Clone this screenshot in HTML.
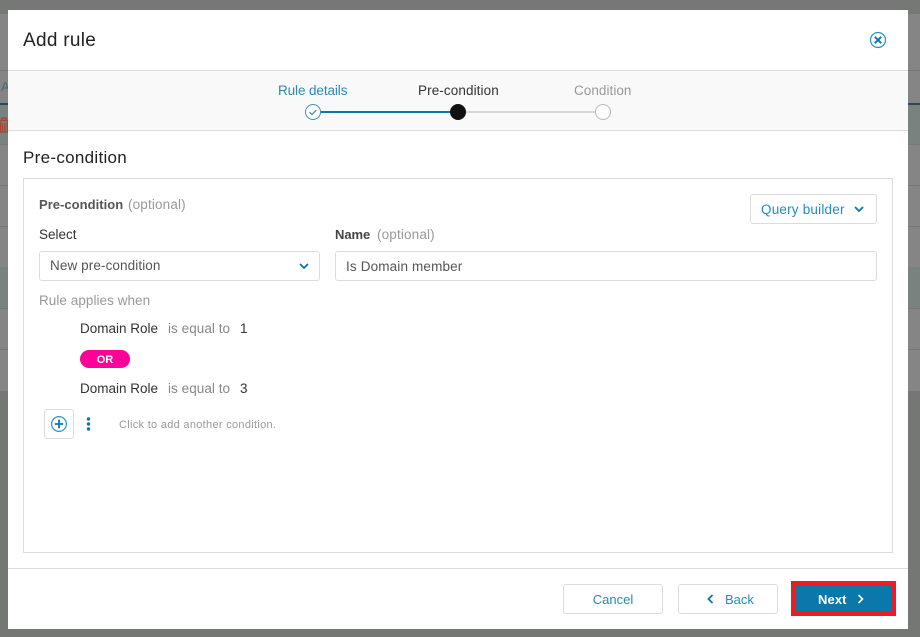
<!DOCTYPE html>
<html><head><meta charset="utf-8"><style>
html,body{margin:0;padding:0}
body{width:920px;height:637px;overflow:hidden;position:relative;background:#858585;font-family:"Liberation Sans",sans-serif;}
.a{position:absolute;box-sizing:border-box}
.t{position:absolute;white-space:nowrap;line-height:20px;font-size:13.5px;color:#333}
.b{border:1px solid #dcdcdc;border-radius:3px;background:#fff}
svg{position:absolute;overflow:visible}
</style></head><body>
<div class="a" style="left:0;top:0;width:920px;height:14px;background:#767876"></div>
<div class="a" style="left:0;top:70px;width:920px;height:1px;background:#777"></div>
<div class="a" style="left:0;top:103px;width:920px;height:2px;background:#2f4858"></div>
<div class="a" style="left:0;top:105px;width:920px;height:39px;background:#78827f"></div>
<div class="a" style="left:0;top:144px;width:920px;height:1px;background:#777"></div>
<div class="a" style="left:0;top:185px;width:920px;height:1px;background:#777"></div>
<div class="a" style="left:0;top:226px;width:920px;height:1px;background:#777"></div>
<div class="a" style="left:0;top:267px;width:920px;height:41px;background:#78827f"></div>
<div class="a" style="left:0;top:308px;width:920px;height:1px;background:#777"></div>
<div class="a" style="left:0;top:349px;width:920px;height:1px;background:#777"></div>
<div class="a" style="left:0;top:391px;width:920px;height:246px;background:#757775"></div>
<div class="t" style="left:1px;top:77px;color:#4a6a7c;font-size:13px">A</div>
<svg style="left:0;top:117px" width="8" height="16" viewBox="0 0 8 16"><path d="M0 3.5H8M2 3V1H6V3" fill="none" stroke="#a04a35" stroke-width="1.5"/><path d="M0.5 5V15H7.5V5M2.5 6V14M5 6V14" fill="none" stroke="#a04a35" stroke-width="1.4"/></svg>

<div class="a" style="left:8px;top:10px;width:900px;height:619px;background:#fff"></div>
<div class="a" style="left:8px;top:70px;width:900px;height:61px;background:#f9f9f9;border-top:1px solid #dcdcdc;border-bottom:1px solid #dcdcdc"></div>

<div class="t" style="left:23px;top:31px;font-size:19px;letter-spacing:.3px;color:#222">Add rule</div>
<svg style="left:869px;top:31px" width="18" height="18" viewBox="0 0 18 18"><circle cx="9" cy="9" r="7.5" fill="none" stroke="#2b93c0" stroke-width="1.2"/><path d="M5.8 5.8L12.2 12.2M12.2 5.8L5.8 12.2" stroke="#0a78aa" stroke-width="2" fill="none"/></svg>

<div class="t" style="left:278px;top:81px;color:#2a8ab5;letter-spacing:-.1px">Rule details</div>
<div class="t" style="left:418px;top:81px;color:#333;letter-spacing:.1px">Pre-condition</div>
<div class="t" style="left:574px;top:81px;color:#999;letter-spacing:.05px">Condition</div>
<div class="a" style="left:320px;top:111px;width:132px;height:2px;background:#0a78aa"></div>
<div class="a" style="left:464px;top:111px;width:132px;height:2px;background:#d8d8d8"></div>
<svg style="left:305px;top:104px" width="16" height="16" viewBox="0 0 16 16"><circle cx="8" cy="8" r="7.5" fill="#fff" stroke="#3a93ba" stroke-width="1"/><path d="M4.6 8.2L7 10.5L11.4 6" fill="none" stroke="#3a7f9f" stroke-width="1.2"/></svg>
<div class="a" style="left:450px;top:104px;width:16px;height:16px;border-radius:50%;background:#111"></div>
<div class="a" style="left:595px;top:104px;width:16px;height:16px;border-radius:50%;background:#fff;border:1px solid #bbb"></div>

<div class="t" style="left:23px;top:148px;font-size:17px;letter-spacing:.3px;color:#222">Pre-condition</div>
<div class="a" style="left:23px;top:178px;width:870px;height:375px;border:1px solid #dcdcdc;background:#fff"></div>

<div class="t" style="left:39px;top:195px;font-size:13px;font-weight:bold;color:#555;letter-spacing:.03px">Pre-condition</div>
<div class="t" style="left:128px;top:195px;color:#999;letter-spacing:.15px">(optional)</div>
<div class="a b" style="left:750px;top:194px;width:127px;height:30px"></div>
<div class="t" style="left:761px;top:200px;color:#2a8ab5;letter-spacing:.2px">Query builder</div>
<svg style="left:854px;top:206px" width="10" height="7" viewBox="0 0 10 7"><path d="M1 1L5 5L9 1" fill="none" stroke="#0a78aa" stroke-width="1.8"/></svg>

<div class="t" style="left:39px;top:225px;color:#333">Select</div>
<div class="t" style="left:335px;top:225px;font-size:13px;color:#444;font-weight:bold;letter-spacing:-.05px">Name</div>
<div class="t" style="left:377px;top:225px;color:#999;letter-spacing:.15px">(optional)</div>
<div class="a b" style="left:39px;top:251px;width:281px;height:30px"></div>
<div class="t" style="left:50px;top:256px;color:#555;letter-spacing:.1px">New pre-condition</div>
<svg style="left:299px;top:263px" width="10" height="7" viewBox="0 0 10 7"><path d="M1 1L5 5L9 1" fill="none" stroke="#0a78aa" stroke-width="1.8"/></svg>
<div class="a b" style="left:335px;top:251px;width:542px;height:30px"></div>
<div class="t" style="left:346px;top:257px;color:#555;letter-spacing:.15px">Is Domain member</div>

<div class="t" style="left:39px;top:291px;color:#999;letter-spacing:.05px">Rule applies when</div>
<div class="t" style="left:80px;top:319px;color:#333">Domain Role</div>
<div class="t" style="left:168px;top:319px;color:#888;letter-spacing:.05px">is equal to</div>
<div class="t" style="left:240px;top:319px;color:#333">1</div>
<div class="a" style="left:80px;top:350px;width:50px;height:18px;border-radius:9px;background:#ff0099"></div>
<div class="t" style="left:80px;top:350px;width:50px;text-align:center;color:#fff;font-size:11px;font-weight:bold">OR</div>
<div class="t" style="left:80px;top:379px;color:#333">Domain Role</div>
<div class="t" style="left:168px;top:379px;color:#888;letter-spacing:.05px">is equal to</div>
<div class="t" style="left:240px;top:379px;color:#333">3</div>

<div class="a b" style="left:44px;top:409px;width:30px;height:30px"></div>
<svg style="left:51px;top:416px" width="16" height="16" viewBox="0 0 16 16"><circle cx="8" cy="8" r="7.4" fill="none" stroke="#2b93c0" stroke-width="1.2"/><path d="M8 3.8V12.2M3.8 8H12.2" stroke="#0a78aa" stroke-width="1.8" fill="none"/></svg>
<svg style="left:85px;top:416px" width="7" height="16" viewBox="0 0 7 16"><circle cx="3.5" cy="3" r="1.7" fill="#0a78aa"/><circle cx="3.5" cy="8" r="1.7" fill="#0a78aa"/><circle cx="3.5" cy="13" r="1.7" fill="#0a78aa"/></svg>
<div class="t" style="left:119px;top:415px;font-size:11px;color:#999;letter-spacing:.3px">Click to add another condition.</div>

<div class="a" style="left:8px;top:568px;width:900px;height:1px;background:#dcdcdc"></div>
<div class="a b" style="left:563px;top:584px;width:100px;height:30px"></div>
<div class="t" style="left:563px;top:590px;width:100px;text-align:center;font-size:13px;color:#2a8ab5">Cancel</div>
<div class="a b" style="left:678px;top:584px;width:100px;height:30px"></div>
<svg style="left:707px;top:594px" width="7" height="10" viewBox="0 0 7 10"><path d="M5.5 1L1.5 5L5.5 9" fill="none" stroke="#0a78aa" stroke-width="1.8"/></svg>
<div class="t" style="left:725px;top:590px;font-size:13px;color:#2a8ab5">Back</div>
<div class="a" style="left:791px;top:581px;width:105px;height:35px;background:#0a78aa;border:5px solid #ed1c24"></div>
<div class="t" style="left:818px;top:590px;font-size:13px;color:#fff;font-weight:bold;letter-spacing:.1px">Next</div>
<svg style="left:857px;top:594px" width="7" height="10" viewBox="0 0 7 10"><path d="M1.5 1L5.5 5L1.5 9" fill="none" stroke="#fff" stroke-width="1.6"/></svg>
</body></html>
